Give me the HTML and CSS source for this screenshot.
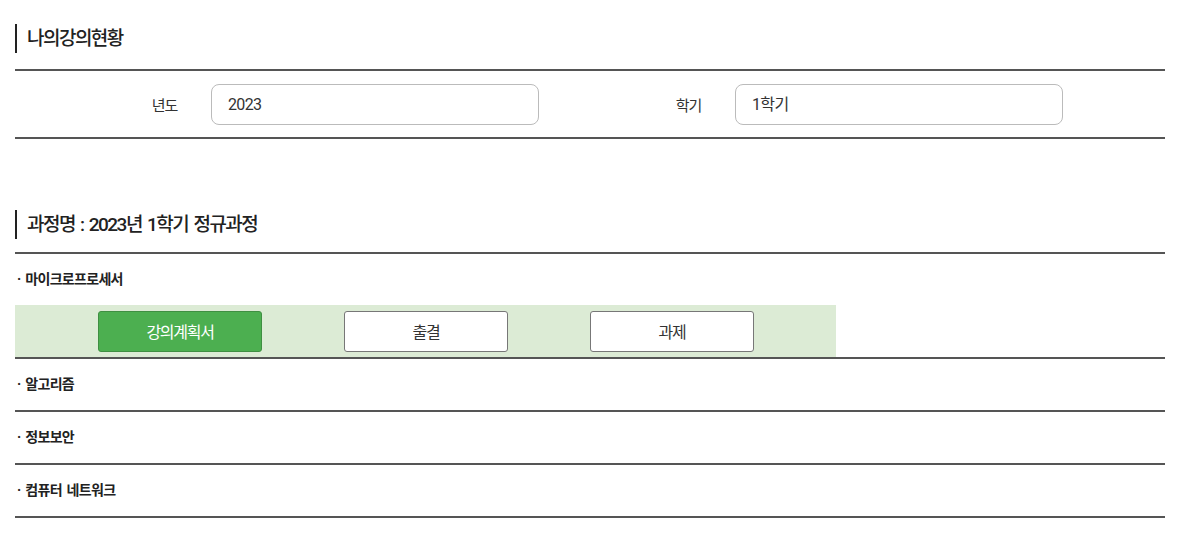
FILE: index.html
```html
<!DOCTYPE html>
<html lang="ko">
<head>
    <meta charset="UTF-8">
    <title>나의강의현황</title>
    <link rel="stylesheet" href="styles.css">
</head>
<body>
    <div class="container">
        <h2 class="tit">나의강의현황</h2>

        <div class="search">
            <div class="field">
                <label class="label">년도</label>
                <div class="input">2023</div>
            </div>
            <div class="field">
                <label class="label">학기</label>
                <div class="input">1학기</div>
            </div>
        </div>

        <h2 class="tit tit-course">과정명 : 2023년 1학기 정규과정</h2>

        <ul class="course-list">
            <li class="course open">
                <div class="name">· 마이크로프로세서</div>
                <div class="actions">
                    <button class="btn btn-green">강의계획서</button>
                    <button class="btn">출결</button>
                    <button class="btn">과제</button>
                </div>
            </li>
            <li class="course"><div class="name">· 알고리즘</div></li>
            <li class="course"><div class="name">· 정보보안</div></li>
            <li class="course"><div class="name">· 컴퓨터 네트워크</div></li>
        </ul>
    </div>
</body>
</html>
```

FILE: styles.css
```css
* {
    margin: 0;
    padding: 0;
    box-sizing: border-box;
}

body {
    font-family: Roboto, "Noto Sans CJK KR", sans-serif;
    color: #222;
    background: #fff;
}

.container {
    width: 1150px;
    margin-left: 15px;
    padding-top: 24px;
}

.tit {
    border-left: 2px solid #222;
    padding-left: 10px;
    height: 29px;
    line-height: 29px;
    font-size: 19px;
    font-weight: 500;
    letter-spacing: -0.08em;
}

.search {
    display: flex;
    align-items: center;
    height: 70px;
    margin-top: 16px;
    border-top: 2px solid #555;
    border-bottom: 2px solid #555;
}

.field {
    display: flex;
    align-items: center;
}

.label {
    width: 162px;
    text-align: right;
    font-size: 15px;
    color: #333;
    letter-spacing: -0.08em;
    margin-right: 34px;
}

.input {
    width: 328px;
    height: 41px;
    line-height: 39px;
    padding-left: 16px;
    border: 1px solid #bbb;
    border-radius: 8px;
    font-size: 16px;
    color: #333;
    letter-spacing: -0.04em;
}

.tit-course {
    margin-top: 71px;
    word-spacing: 2px;
}

.course-list {
    list-style: none;
    margin-top: 13px;
    border-top: 2px solid #555;
}

.course {
    border-bottom: 2px solid #555;
}

.name {
    height: 51px;
    line-height: 51px;
    padding-left: 2px;
    font-size: 14px;
    font-weight: 700;
    letter-spacing: -0.05em;
    word-spacing: 2px;
}

.actions {
    display: flex;
    align-items: center;
    gap: 82px;
    width: 821px;
    height: 52px;
    padding-left: 83px;
    background: #dcebd5;
}

.btn {
    width: 164px;
    height: 41px;
    background: #fff;
    border: 1px solid #777;
    border-radius: 3px;
    font-family: inherit;
    font-size: 16px;
    color: #333;
    letter-spacing: -0.08em;
}

.btn-green {
    background: #4caf50;
    border-color: #3f8f42;
    color: #fff;
}
```
